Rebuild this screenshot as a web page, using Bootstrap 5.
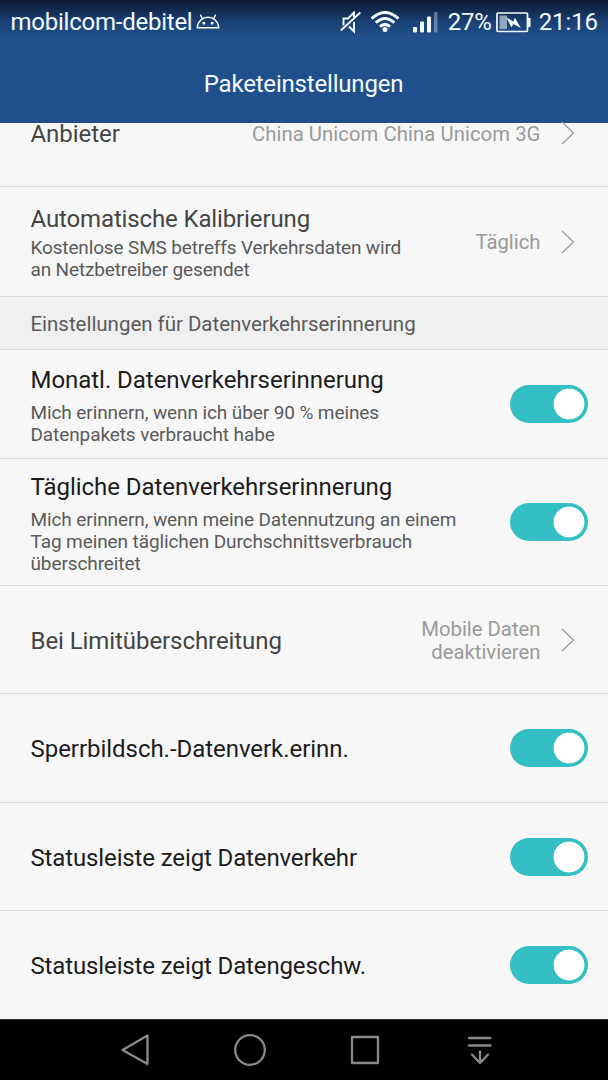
<!DOCTYPE html>
<html lang="de">
<head>
<meta charset="utf-8">
<meta name="viewport" content="width=device-width, initial-scale=1">
<title>Paketeinstellungen</title>
<link href="https://cdn.jsdelivr.net/npm/bootstrap@5.3.0/dist/css/bootstrap.min.css" rel="stylesheet">
<style>
body{font-family:Roboto,"Liberation Sans",sans-serif;width:608px;height:1080px;overflow:hidden;background:#f7f7f7;color:#1c1c1c}
.topbar{height:123px;background:linear-gradient(#0b1c33 0,#122b4e 10px,#1a4075 22px,#20508b 38px,#20508b 100%);color:#f4fbff}
.status{height:44px;padding:0 10px 0 10.5px;font-size:24px}
.status svg,.sysnav svg,.chev{display:block;flex:none}
.carrier{letter-spacing:-.24px}
.droid{margin-left:1px}
.wifi{margin-left:9px}
.signal{margin-left:13px}
.percent{margin-left:10px;letter-spacing:-.2px}
.battery{margin-left:4px}
.clock{margin-left:8px;letter-spacing:-.1px}
.heading{height:79px;font-size:24px;font-weight:400;letter-spacing:-.19px;padding:2px 1px 0 0}
.setting{border-bottom:1px solid #dcdcdc;padding:2px 20px 0 30.5px;background:#f7f7f7}
.name{font-size:24px;line-height:28px;white-space:nowrap;letter-spacing:-.04px}
.tight{letter-spacing:-.13px}
.info{font-size:19px;line-height:22px;color:#5a5a5a;white-space:nowrap;letter-spacing:-.1px}
.info.tight{letter-spacing:-.15px}
.muted-name{color:#444}
.name.limit{letter-spacing:-.07px}
.val{font-size:20.3px;line-height:23px;color:#999;text-align:right;white-space:nowrap}
.chev{margin:-2px 13px 0 20.5px}
.row-provider{height:64px;padding-top:0}
.row-provider .name{margin-top:-3px}
.row-provider .val{letter-spacing:.06px}
.described{padding-top:2px}
.section-title{height:53px;background:#f0f0f0;border-bottom:1px solid #dcdcdc;padding:3px 30.5px 0;font-size:20.5px;color:#5a5a5a;white-space:nowrap;letter-spacing:-.03px}
.form-switch .toggle.form-check-input{width:78px;height:38px;margin:-2px 0 0;border:0;border-radius:19px;background-color:#33bfc3;background-image:radial-gradient(circle at 59px 19px,#fff 15px,transparent 15.8px);background-size:100% 100%;background-position:0 0}
.sysnav{height:61px;background:#000;border-top:1px solid #333}
.h-108{height:108px}
.h-109{height:109px}
.h-110{height:110px}
.h-127{height:127px}
</style>
</head>
<body>
<header class="topbar">
  <div class="status d-flex align-items-center">
    <span class="carrier">mobilcom-debitel</span>
    <svg class="droid ms-1" width="24" height="16" viewBox="0 0 24 16" fill="none" stroke="currentColor" stroke-width="1.5"><path d="M1.3 13.7C1.800 7 6.600 3.300 12 3.300s10.200 3.700 10.700 10.400z"/><path d="M6.300 4.500 4.600 1.200M17.700 4.500l1.700-3.300" stroke-linecap="round"/><circle cx="7.800" cy="9.300" r=".7" fill="currentColor"/><circle cx="16.200" cy="9.300" r=".7" fill="currentColor"/></svg>
    <svg class="ms-auto" width="21" height="23" viewBox="0 0 21 23" fill="none" stroke="currentColor" stroke-width="1.900"><path d="M.8 19.500 20.300 1.500"/><path d="M3.500 14.500V7.500h4.500L14 1.500v5M14 11v9.500L9 15.500"/></svg>
    <svg class="wifi" width="30" height="22" viewBox="0 0 30 22" fill="none" stroke="currentColor" stroke-width="3"><path d="M1.600 7.700Q15-4.700 28.400 7.700"/><path d="M5.700 11.700Q15 3.200 24.300 11.700"/><path d="M9.900 15.600Q15 11.100 20.100 15.600"/><circle cx="15" cy="18.600" r="2.500" fill="currentColor" stroke="none"/></svg>
    <svg class="signal" width="25" height="21" viewBox="0 0 25 21" fill="currentColor"><rect y="15" width="4" height="5.500" rx="1"/><rect x="7" y="9.500" width="4" height="11" rx="1"/><rect x="14" y="4.500" width="4" height="16" rx="1"/><rect x="21" width="3.500" height="20.500" rx="1" opacity=".35"/></svg>
    <span class="percent">27%</span>
    <svg class="battery" width="35" height="21" viewBox="0 0 35 21"><rect x="1" y="1" width="30.500" height="18.500" rx="1" fill="none" stroke="currentColor" stroke-width="1.700"/><rect x="32" y="6" width="2.500" height="9" fill="currentColor"/><rect x="3.500" y="3.500" width="7.500" height="13.500" fill="currentColor" opacity=".55"/><path d="M10.500 5.500l7 4 1.300-4 6 10.500-7.500-4-1.800 3.500z" fill="currentColor"/></svg>
    <span class="clock">21:16</span>
  </div>
  <h1 class="heading m-0 d-flex align-items-center justify-content-center">Paketeinstellungen</h1>
</header>
<main>
  <section class="setting row-provider d-flex">
    <div class="name muted-name">Anbieter</div>
    <div class="val ms-auto">China Unicom China Unicom 3G</div>
    <svg class="chev" width="14" height="24" viewBox="0 0 14 24" fill="none" stroke="#9a9a9a" stroke-width="1.200"><path d="M1 1l11.500 11L1 23"/></svg>
  </section>
  <section class="setting d-flex align-items-center h-110">
    <div><div class="name muted-name tight mb-1">Automatische Kalibrierung</div><div class="info tight">Kostenlose SMS betreffs Verkehrsdaten wird<br>an Netzbetreiber gesendet</div></div>
    <div class="val ms-auto">Täglich</div>
    <svg class="chev" width="14" height="24" viewBox="0 0 14 24" fill="none" stroke="#9a9a9a" stroke-width="1.200"><path d="M1 1l11.500 11L1 23"/></svg>
  </section>
  <h2 class="section-title m-0 d-flex align-items-center fw-normal">Einstellungen für Datenverkehrserinnerung</h2>
  <section class="setting d-flex align-items-center h-109">
    <div class="described"><div class="name mb-2">Monatl. Datenverkehrserinnerung</div><div class="info">Mich erinnern, wenn ich über 90 % meines<br>Datenpakets verbraucht habe</div></div>
    <div class="form-check form-switch ms-auto p-0 m-0 d-flex"><input class="form-check-input toggle" type="checkbox" role="switch" checked></div>
  </section>
  <section class="setting d-flex align-items-center h-127">
    <div class="described"><div class="name mb-2">Tägliche Datenverkehrserinnerung</div><div class="info">Mich erinnern, wenn meine Datennutzung an einem<br>Tag meinen täglichen Durchschnittsverbrauch<br>überschreitet</div></div>
    <div class="form-check form-switch ms-auto p-0 m-0 d-flex"><input class="form-check-input toggle" type="checkbox" role="switch" checked></div>
  </section>
  <section class="setting d-flex align-items-center h-108">
    <div class="name muted-name limit">Bei Limitüberschreitung</div>
    <div class="val ms-auto">Mobile Daten<br>deaktivieren</div>
    <svg class="chev" width="14" height="24" viewBox="0 0 14 24" fill="none" stroke="#9a9a9a" stroke-width="1.200"><path d="M1 1l11.500 11L1 23"/></svg>
  </section>
  <section class="setting d-flex align-items-center h-109">
    <div class="name">Sperrbildsch.-Datenverk.erinn.</div>
    <div class="form-check form-switch ms-auto p-0 m-0 d-flex"><input class="form-check-input toggle" type="checkbox" role="switch" checked></div>
  </section>
  <section class="setting d-flex align-items-center h-108">
    <div class="name tight">Statusleiste zeigt Datenverkehr</div>
    <div class="form-check form-switch ms-auto p-0 m-0 d-flex"><input class="form-check-input toggle" type="checkbox" role="switch" checked></div>
  </section>
  <section class="setting d-flex align-items-center border-0 h-108">
    <div class="name tight">Statusleiste zeigt Datengeschw.</div>
    <div class="form-check form-switch ms-auto p-0 m-0 d-flex"><input class="form-check-input toggle" type="checkbox" role="switch" checked></div>
  </section>
</main>
<nav class="sysnav">
  <svg width="608" height="60" viewBox="0 1 608 60" fill="none" stroke="#8a8a8a" stroke-width="2.300" stroke-linejoin="round" stroke-linecap="round"><path d="M122.500 31 147.500 16.500V45z"/><circle cx="250" cy="31" r="14.800"/><rect x="352" y="18" width="26" height="26"/><path d="M469 19h21.500M469 26.500h21.500M480 32.500v11.500M472 35.500l8 8.500 8-8.500"/></svg>
</nav>
<script src="https://cdn.jsdelivr.net/npm/bootstrap@5.3.0/dist/js/bootstrap.bundle.min.js"></script>
</body>
</html>
